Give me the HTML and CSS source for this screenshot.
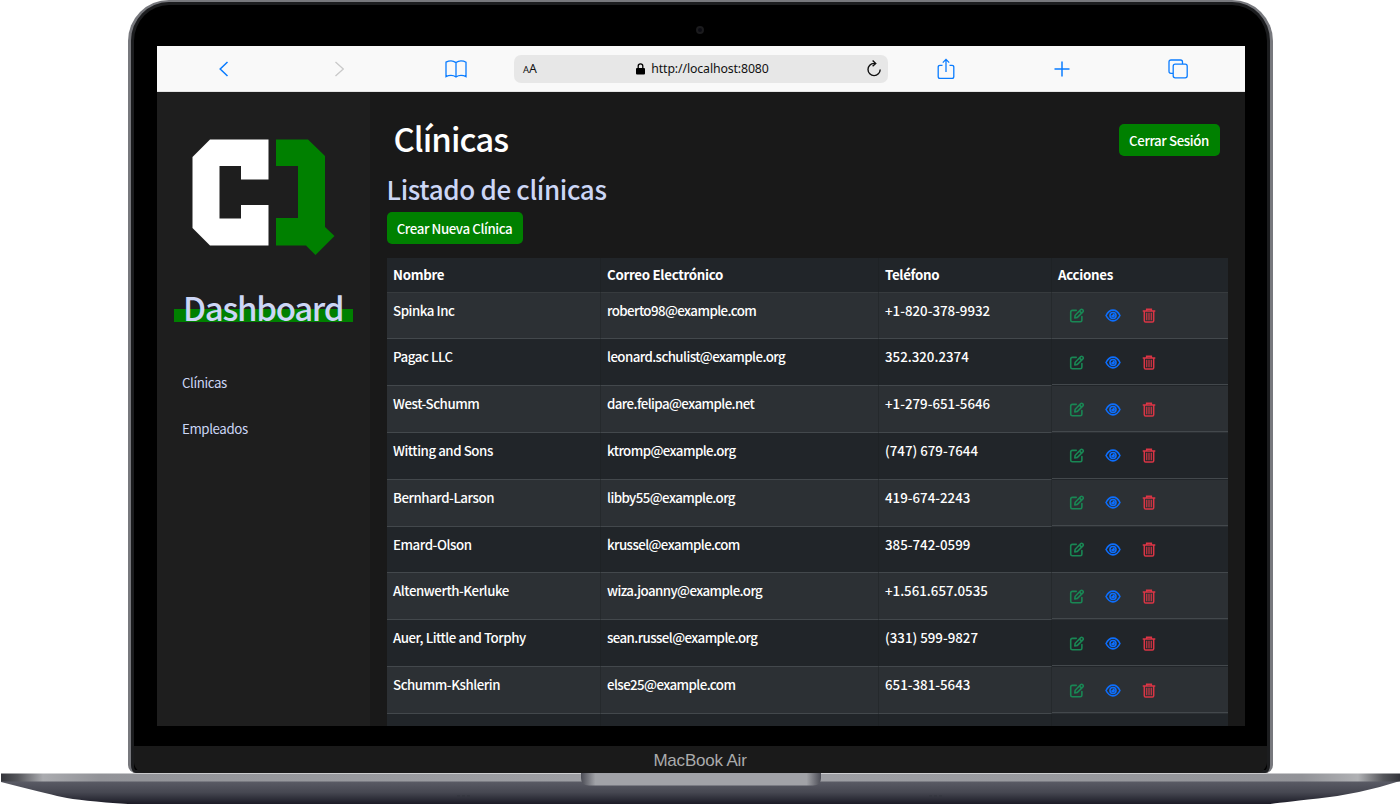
FILE: index.html
```
<!DOCTYPE html>
<html lang="es">
<head>
<meta charset="utf-8">
<title>Clínicas</title>
<link rel="stylesheet" href="styles.css">
</head>
<body>
<svg class="symbols" width="0" height="0" aria-hidden="true">
  <symbol id="edit" viewBox="0 0 16 16"><path fill="none" stroke="currentColor" stroke-width="1.7" stroke-linejoin="round" stroke-linecap="round" d="M7.2 2.5H3Q1.3 2.5 1.3 4.2V13Q1.3 14.7 3 14.7H11.5Q13.2 14.7 13.2 13V9M5.6 10.6L6.1 7.7 12 1.8Q13 .8 14.1 1.9T14.3 4.1L8.4 10 5.6 10.6ZM10.8 3.3L12.9 5.4"/></symbol>
  <symbol id="eye" viewBox="0 0 18 16"><g fill="none" stroke="currentColor" stroke-width="1.8"><path d="M1.2 8Q4.1 2 9 2T16.8 8Q13.9 14 9 14T1.2 8Z"/><circle cx="9" cy="8" r="3.4"/></g><path fill="currentColor" d="M9 5.800A2.200 2.200 0 1 1 6.800 8Q9 8 9 5.800Z"/></symbol>
  <symbol id="trash" viewBox="0 0 14 16"><path fill="none" stroke="currentColor" stroke-width="1.6" d="M.3 3.2H13.7M4.5 3V1.2H9.5V3M2 3.5V13.6Q2 15 3.4 15H10.6Q12 15 12 13.6V3.5"/><path stroke="currentColor" stroke-width="1.2" d="M4.6 5V13M7 5V13M9.4 5V13"/></symbol>
</svg>
<div class="laptop">
  <div class="lid">
    <div class="bezel"><span class="camera"></span></div>
    <div class="screen">
      <header class="browser">
        <div class="tool"><svg width="12" height="18" viewBox="0 0 12 18"><path d="M9.5 2L2.2 9L9.5 16" stroke-width="1.5"/></svg></div>
        <div class="tool off"><svg width="12" height="18" viewBox="0 0 12 18"><path d="M1.5 2L9.3 9L1.5 16" stroke-width="1.3"/></svg></div>
        <div class="tool"><svg width="22" height="18" viewBox="0 0 22 18"><path d="M11 2.6Q8.5.9 6 .9T1 2.2V16.6Q3.2 15.4 6 15.4T11 17Q13.2 15.4 16 15.4T21 16.6V2.2Q18.8.9 16 .9T11 2.6V17" stroke-width="1.3"/></svg></div>
        <div class="address">
          <span class="reader"><small>A</small>A</span>
          <span class="url"><svg width="9" height="12" viewBox="0 0 9 12"><path d="M2.2 5V3Q2.2.8 4.5.8T6.8 3V5" fill="none" stroke="#000" stroke-width="1.3"/><rect y="5" width="9" height="6.5" rx="1" fill="#000"/></svg>http://localhost:8080</span>
          <svg class="reload" width="16" height="18" viewBox="0 0 16 18"><path d="M8.8 3.4H8A6.1 6.1 0 1 0 14.2 9.6M6.6.6L9.7 3.4L6.6 6.2" fill="none" stroke="#111" stroke-width="1.4"/></svg>
        </div>
        <div class="tool"><svg width="18" height="22" viewBox="0 0 18 22"><path d="M5.5 7.3H3Q1.2 7.3 1.2 9V18.5Q1.2 20.4 3 20.4H15Q16.8 20.4 16.8 18.5V9Q16.8 7.3 15 7.3H12.5M9 14V1.5M5.8 4.6L9 1.4L12.2 4.6" stroke-width="1.3"/></svg></div>
        <div class="tool"><svg width="16" height="16" viewBox="0 0 16 16"><path d="M8 .5V15.5M.5 8H15.5" stroke-width="1.5"/></svg></div>
        <div class="tool"><svg width="20" height="20" viewBox="0 0 20 20"><path d="M5 14.3H3Q1 14.3 1 12.3V3Q1 1 3 1H12.5Q14.5 1 14.5 3V5" stroke-width="1.3"/><rect x="5.2" y="5.2" width="14" height="13.6" rx="2" stroke-width="1.3"/></svg></div>
      </header>
      <div class="app">
        <aside class="sidebar">
          <svg class="logo" width="144" height="118" viewBox="0 0 144 118"><path fill="#fff" d="M18 .5H76.5V40.5H49V27H27.5V79.5H49V66H76.5V106.5H18L.5 89V18Z"/><path fill="green" d="M84 .5H116L133 17V88L142.5 97L123.500 116L114 106.500H84V79H106V27H84Z"/></svg>
          <h1 class="brand">Dashboard</h1>
          <nav><a>Clínicas</a><a>Empleados</a></nav>
        </aside>
        <main class="content">
          <div class="topbar"><h2 class="title">Clínicas</h2><button class="btn logout">Cerrar Sesión</button></div>
          <h3 class="subtitle">Listado de clínicas</h3>
          <button class="btn create">Crear Nueva Clínica</button>
          <div class="table" id="table">
            <div class="row head"><span>Nombre</span><span>Correo Electrónico</span><span>Teléfono</span><span>Acciones</span></div>
          </div>
        </main>
      </div>
    </div>
    <div class="chin">MacBook Air</div>
  </div>
  <svg class="base" width="1400" height="31" viewBox="0 0 1400 31">
    <defs>
      <linearGradient id="edge"><stop offset="0" stop-color="#34353b"/><stop offset=".012" stop-color="#55565b"/><stop offset=".03" stop-color="#aaabaf"/><stop offset=".07" stop-color="#929398"/><stop offset=".5" stop-color="#a0a1a6"/><stop offset=".93" stop-color="#929398"/><stop offset=".97" stop-color="#b0b1b4"/><stop offset=".988" stop-color="#55565b"/><stop offset="1" stop-color="#34353b"/></linearGradient>
      <linearGradient id="under" x2="0" y2="1"><stop offset="0" stop-color="#5b5c66"/><stop offset=".5" stop-color="#464751"/><stop offset="1" stop-color="#1b1b26"/></linearGradient>
      <linearGradient id="notch"><stop offset="0" stop-color="#4b4c55"/><stop offset=".06" stop-color="#a1a2a7"/><stop offset=".94" stop-color="#a1a2a7"/><stop offset="1" stop-color="#4b4c55"/></linearGradient>
    </defs>
    <path fill="url(#under)" d="M1 8H1400Q1360 21 1318 25.500T1270 31H128Q80 28 62 24T1 9Z"/>
    <path fill="url(#edge)" d="M1 .5H1400V8.500H1Z"/>
    <path fill="url(#notch)" d="M581 0H821V5Q821 12.500 813 12.500H589Q581 12.500 581 5Z"/>
    <path fill="none" stroke="#33343c" d="M457 23H472M929 23H944" stroke-dasharray="3 2"/>
  </svg>
</div>
<script src="table.js"></script>
</body>
</html>
```
FILE: styles.css
```
* { box-sizing: border-box; }
body { margin: 0; background: #fff; font-family: "Noto Sans CJK SC", "Noto Sans", sans-serif; overflow: hidden; }
h1, h2, h3 { margin: 0; font-weight: 500; }
.symbols { position: absolute; }
.laptop { width: 1400px; height: 804px; display: flex; flex-direction: column; align-items: center; }
.lid { width: 1145px; height: 773px; border: 3px solid #77787d; border-top-width: 2px; border-bottom: 0; border-radius: 41px 41px 8px 8px; background: #000; box-shadow: inset 0 0 0 3px #1c1d1f; display: flex; flex-direction: column; flex: none; overflow: hidden; }
.bezel { height: 44px; flex: none; display: flex; justify-content: center; padding-top: 24px; }
.camera { width: 8px; height: 8px; border-radius: 50%; background: #0b0b12; border: 2px solid #1b1b1d; }
.screen { width: 1088px; height: 680px; margin-left: 26.5px; flex: none; overflow: hidden; }
.chin { height: 27px; margin: 20px 3px 0; background: #1a1a1a; border-radius: 0 0 11px 11px; color: #aaabac; font: 17px/30px "Liberation Sans", sans-serif; letter-spacing: -.2px; text-align: center; flex: none; }
.base { display: block; flex: none; }

.browser { height: 46px; background: #f9f9f9; border-bottom: 1px solid #e4e4e4; display: grid; grid-template-columns: 125px 116px 116px 374px 116px 115px 126px; align-items: center; }
.tool { display: flex; justify-content: center; padding-left: 9px; }
.tool:nth-child(2), .tool:nth-child(3) { padding-left: 0; }
.tool:nth-child(n+5) { padding-left: 0; }
.tool:last-child { padding-right: 8px; }
.tool svg { fill: none; stroke: #0a7cff; }
.tool.off svg { stroke: #c9c9c9; }
.address { height: 28px; border-radius: 7px; background: #e7e7e7; display: flex; align-items: center; justify-content: space-between; padding: 0 6px 0 9px; font: 12.3px/28px "Noto Sans", sans-serif; color: #111; }
.reader { width: 40px; padding-top: 1px; }
.reader small { font-size: 9.5px; }
.url { display: flex; align-items: center; gap: 6px; letter-spacing: -.12px; padding: 1px 24px 0 0; }

.app { display: flex; height: 634px; background: #191919; }
.sidebar { width: 213px; background: #1e1e1e; flex: none; }
.logo { display: block; margin: 47px 0 0 35px; }
.brand { width: 179px; height: 44px; margin: 28px 0 0 17px; padding-left: 9px; color: #ccd6f6; font-size: 33px; line-height: 44px; letter-spacing: -1.3px; background: linear-gradient(green, green) 0 24px / 179px 13px no-repeat; }
nav { display: flex; flex-direction: column; margin: 42px 0 0 25px; gap: 22px; }
nav a { color: #ccd6f6; font-size: 13.3px; line-height: 24px; letter-spacing: -.4px; }
.content { width: 858px; padding: 32px 0 0 16.5px; }
.topbar { display: flex; justify-content: space-between; height: 49px; padding-right: 8.5px; }
.title { padding-left: 7px; color: #fff; font-size: 33px; line-height: 28px; letter-spacing: -.95px; }
.subtitle { color: #ccd6f6; font-size: 26px; line-height: 32px; height: 36px; letter-spacing: -.35px; }
.btn { display: block; height: 32px; border: 0; border-radius: 5px; background: green; color: #fff; font: 500 13.3px/33px "Noto Sans CJK SC", sans-serif; letter-spacing: -.4px; padding: 0; }
.logout { width: 101px; }
.create { width: 136px; margin-top: 3px; }
.table { margin-top: 14px; color: #fff; font-size: 13.3px; font-weight: 500; letter-spacing: -.45px; }
.row { display: grid; grid-template-columns: 214px 278px 173px 176.500px; height: 46.83px; background: #212529; }
.row > * { padding: 6px 6.5px; line-height: 24px; border-bottom: 1px solid #43484c; border-right: 1px solid rgba(25, 28, 31, .35); white-space: nowrap; }
.row > :nth-child(2) { letter-spacing: -.58px; }
.row > :nth-child(3) { letter-spacing: 0; }
.row > :last-child { border-right: 0; }
.row:nth-child(even) { background: #2c3034; }
.row.head { height: 34.5px; font-weight: 700; }
.row.head > * { padding-top: 5px; height: 34.5px; letter-spacing: -.3px; border-bottom: 1px solid #373b3e; }
.row .actions { height: 46px; display: flex; gap: 20px; align-items: center; padding: 1px 0 0 17px; }
.actions svg { display: block; width: 16px; height: 15px; }
.edit { color: #198754; }
.eye { color: #0d6efd; }
.trash { color: #dc3545; }
```
FILE: table.js
```
const rows = [
  ["Spinka Inc", "roberto98@example.com", "+1-820-378-9932"],
  ["Pagac LLC", "leonard.schulist@example.org", "352.320.2374"],
  ["West-Schumm", "dare.felipa@example.net", "+1-279-651-5646"],
  ["Witting and Sons", "ktromp@example.org", "(747) 679-7644"],
  ["Bernhard-Larson", "libby55@example.org", "419-674-2243"],
  ["Emard-Olson", "krussel@example.com", "385-742-0599"],
  ["Altenwerth-Kerluke", "wiza.joanny@example.org", "+1.561.657.0535"],
  ["Auer, Little and Torphy", "sean.russel@example.org", "(331) 599-9827"],
  ["Schumm-Kshlerin", "else25@example.com", "651-381-5643"],
  ["", "", ""]
];
const icons = ["edit", "eye", "trash"].map(n => `<svg class="${n}"><use href="#${n}"/></svg>`).join("");
document.getElementById("table").insertAdjacentHTML("beforeend", rows.map(r =>
  `<div class="row">${r.map(c => `<span>${c}</span>`).join("")}<span class="actions">${icons}</span></div>`).join(""));
```
